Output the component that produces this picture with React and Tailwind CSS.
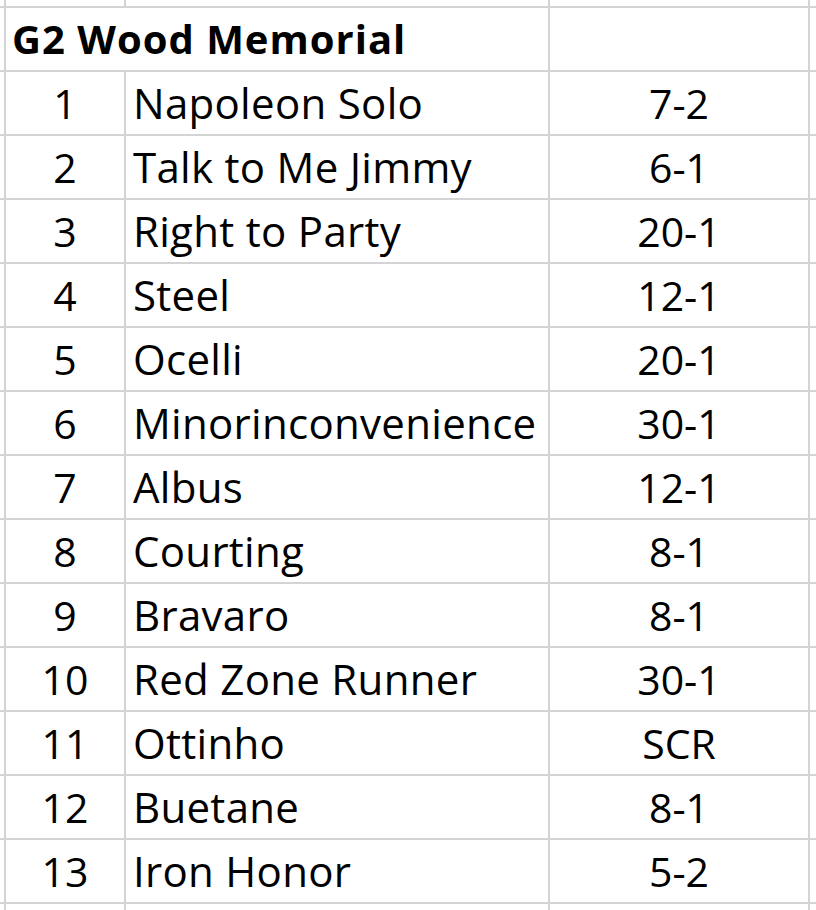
import React from 'react';

const rows = [
  ['1', 'Napoleon Solo', '7-2'],
  ['2', 'Talk to Me Jimmy', '6-1'],
  ['3', 'Right to Party', '20-1'],
  ['4', 'Steel', '12-1'],
  ['5', 'Ocelli', '20-1'],
  ['6', 'Minorinconvenience', '30-1'],
  ['7', 'Albus', '12-1'],
  ['8', 'Courting', '8-1'],
  ['9', 'Bravaro', '8-1'],
  ['10', 'Red Zone Runner', '30-1'],
  ['11', 'Ottinho', 'SCR'],
  ['12', 'Buetane', '8-1'],
  ['13', 'Iron Honor', '5-2'],
];

const Edge = () => <div className="bg-white" />;

const App = () => {
  return (
    <div
      className="w-[816px] h-[910px] overflow-hidden bg-[#d4d4d4] grid grid-cols-[4px_118px_422px_258px_1fr] grid-rows-[6px_repeat(14,62px)_1fr] gap-[2px] text-black"
      style={{ fontFamily: '"Open Sans", Lato, sans-serif' }}
    >
      {/* partial row above */}
      <Edge /><Edge /><Edge /><Edge /><Edge />

      {/* title row, A:B merged */}
      <Edge />
      <div className="bg-white col-span-2 flex items-end pb-[11px] pl-[6px]">
        <span className="text-[40px] leading-none font-bold tracking-[1px] whitespace-nowrap">G2 Wood Memorial</span>
      </div>
      <div className="bg-white" />
      <Edge />

      {rows.map(([num, name, odds]) => (
        <React.Fragment key={num}>
          <Edge />
          <div className="bg-white flex items-end justify-center pb-[10px]">
            <span className="text-[41px] leading-none">{num}</span>
          </div>
          <div className="bg-white flex items-end pb-[10px] pl-[7px]">
            <span className="text-[42px] leading-none tracking-[0.3px] whitespace-nowrap">{name}</span>
          </div>
          <div className="bg-white flex items-end justify-center pb-[10px]">
            <span className="text-[41px] leading-none">{odds}</span>
          </div>
          <Edge />
        </React.Fragment>
      ))}

      {/* partial row below */}
      <Edge /><Edge /><Edge /><Edge /><Edge />
    </div>
  );
};

export default App;
